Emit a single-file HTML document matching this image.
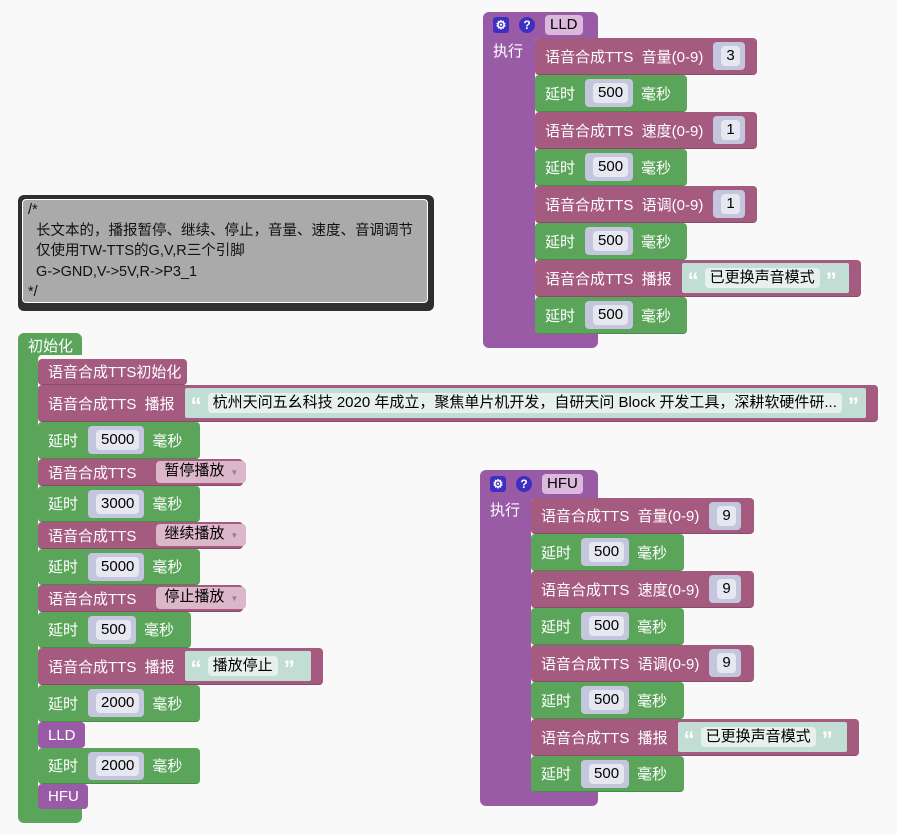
<!DOCTYPE html>
<html><head><meta charset="utf-8"><style>
body{margin:0;width:897px;height:835px;background:#f9f9f9;overflow:hidden;font-family:"Liberation Sans","Noto Sans CJK SC",sans-serif;}
.a{position:absolute;box-sizing:border-box}
.b{position:absolute;box-sizing:border-box;color:#fff;font-size:15px;display:flex;align-items:center;padding-left:10px;white-space:nowrap;border-radius:4px}
.t{background:#a55b80;border-bottom:1px solid #8a4a6a}
.g{background:#5ba55b;border-bottom:1px solid #4a8a4a}
.p{background:#995ba5}
.s{background:#c3c6dc;border-radius:4px;padding:4px 5px 4px 8px;margin:0 8px 0 10px;display:flex}
.f{background:#e6e7f0;color:#000;border-radius:4px;padding:1px 5px;line-height:18px}
.q{background:#c2ddd4;border-radius:2px;padding:4px 6px;margin:0 12px 0 10px;flex:1;display:flex;align-items:center;color:#fff;font-size:22px;font-weight:bold;height:30px;box-sizing:border-box}
.q i{font-style:normal;line-height:18px;padding-top:6px}
.qf{background:#e6f0ec;color:#000;border-radius:4px;padding:1px 5px;line-height:18px;margin:0 6px;font-size:15px;font-weight:normal}
.d{background:#dcb6c9;color:#000;border-radius:4px;padding:1px 8px;line-height:18px;margin-left:20px}
.d span{font-size:8px;color:#888;margin-left:6px}
.ic{display:inline-block;width:16px;height:16px;background:#3d2fc2;color:#fff;font-size:12px;text-align:center;line-height:16px;font-weight:bold;margin-right:10px}
</style></head><body>

<div class="a" style="left:18px;top:195px;width:416px;height:116px;background:#2f2f2f;border-radius:6px"></div>
<div class="a" style="left:22px;top:199px;width:406px;height:104px;background:#aaa;border:1px solid #fff;border-radius:4px;font-size:14.5px;line-height:20.5px;padding:0 0 0 5px;color:#111">/*<br>&nbsp;&nbsp;长文本的，播报暂停、继续、停止，音量、速度、音调调节<br>&nbsp;&nbsp;仅使用TW-TTS的G,V,R三个引脚<br>&nbsp;&nbsp;G-&gt;GND,V-&gt;5V,R-&gt;P3_1<br>*/</div>

<div class="a" style="left:18px;top:333px;width:64px;height:490px;background:#5ba55b;border-radius:6px"></div>
<div class="a" style="left:38px;top:355px;width:50px;height:448px;background:#f9f9f9;border-radius:4px 0 0 4px"></div>
<div class="b" style="left:18px;top:333px;width:64px;height:24px;background:transparent;padding-left:10px">初始化</div>
<div class="b t" style="left:38px;top:359px;width:149px;height:26px">语音合成TTS初始化</div>
<div class="b t" style="left:38px;top:385px;width:840px;height:37px">语音合成TTS&nbsp;&nbsp;播报<div class="q"><i>“</i><span class="qf">杭州天问五幺科技 2020 年成立，聚焦单片机开发，自研天问 Block 开发工具，深耕软硬件研...</span><i>”</i></div></div>
<div class="b g" style="left:38px;top:422px;width:162px;height:37px">延时<div class="s"><span class="f">5000</span></div>毫秒</div>
<div class="b t" style="left:38px;top:459px;width:205px;height:27px">语音合成TTS<div class="d">暂停播放<span>▼</span></div></div>
<div class="b g" style="left:38px;top:486px;width:162px;height:36px">延时<div class="s"><span class="f">3000</span></div>毫秒</div>
<div class="b t" style="left:38px;top:522px;width:205px;height:27px">语音合成TTS<div class="d">继续播放<span>▼</span></div></div>
<div class="b g" style="left:38px;top:549px;width:162px;height:36px">延时<div class="s"><span class="f">5000</span></div>毫秒</div>
<div class="b t" style="left:38px;top:585px;width:205px;height:27px">语音合成TTS<div class="d">停止播放<span>▼</span></div></div>
<div class="b g" style="left:38px;top:612px;width:153px;height:36px">延时<div class="s"><span class="f">500</span></div>毫秒</div>
<div class="b t" style="left:38px;top:648px;width:285px;height:37px">语音合成TTS&nbsp;&nbsp;播报<div class="q"><i>“</i><span class="qf">播放停止</span><i>”</i></div></div>
<div class="b g" style="left:38px;top:685px;width:162px;height:37px">延时<div class="s"><span class="f">2000</span></div>毫秒</div>
<div class="b p" style="left:38px;top:722px;width:47px;height:26px">LLD</div>
<div class="b g" style="left:38px;top:748px;width:162px;height:36px">延时<div class="s"><span class="f">2000</span></div>毫秒</div>
<div class="b p" style="left:38px;top:784px;width:50px;height:25px">HFU</div>

<div class="a" style="left:483px;top:12px;width:115px;height:336px;background:#995ba5;border-radius:6px"></div>
<div class="a" style="left:535px;top:38px;width:63px;height:296px;background:#f9f9f9;border-radius:4px 0 0 4px"></div>
<div class="b" style="left:483px;top:12px;height:26px;padding-left:10px"><span class="ic" style="border-radius:3px">⚙</span><span class="ic" style="border-radius:8px">?</span><span class="f" style="background:#dcb8dc;margin-left:0">LLD</span></div>
<div class="b" style="left:483px;top:38px;height:24px;padding-left:10px">执行</div>
<div class="b t" style="left:535px;top:38px;width:222px;height:37px">语音合成TTS&nbsp;&nbsp;音量(0-9)<div class="s"><span class="f">3</span></div></div>
<div class="b g" style="left:535px;top:75px;width:152px;height:37px">延时<div class="s"><span class="f">500</span></div>毫秒</div>
<div class="b t" style="left:535px;top:112px;width:222px;height:37px">语音合成TTS&nbsp;&nbsp;速度(0-9)<div class="s"><span class="f">1</span></div></div>
<div class="b g" style="left:535px;top:149px;width:152px;height:37px">延时<div class="s"><span class="f">500</span></div>毫秒</div>
<div class="b t" style="left:535px;top:186px;width:222px;height:37px">语音合成TTS&nbsp;&nbsp;语调(0-9)<div class="s"><span class="f">1</span></div></div>
<div class="b g" style="left:535px;top:223px;width:152px;height:37px">延时<div class="s"><span class="f">500</span></div>毫秒</div>
<div class="b t" style="left:535px;top:260px;width:326px;height:37px">语音合成TTS&nbsp;&nbsp;播报<div class="q"><i>“</i><span class="qf">已更换声音模式</span><i>”</i></div></div>
<div class="b g" style="left:535px;top:297px;width:152px;height:37px">延时<div class="s"><span class="f">500</span></div>毫秒</div>

<div class="a" style="left:480px;top:470px;width:118px;height:336px;background:#995ba5;border-radius:6px"></div>
<div class="a" style="left:531px;top:498px;width:67px;height:294px;background:#f9f9f9;border-radius:4px 0 0 4px"></div>
<div class="b" style="left:480px;top:470px;height:28px;padding-left:10px"><span class="ic" style="border-radius:3px">⚙</span><span class="ic" style="border-radius:8px">?</span><span class="f" style="background:#dcb8dc;margin-left:0">HFU</span></div>
<div class="b" style="left:480px;top:498px;height:22px;padding-left:10px">执行</div>
<div class="b t" style="left:531px;top:498px;width:223px;height:36px">语音合成TTS&nbsp;&nbsp;音量(0-9)<div class="s"><span class="f">9</span></div></div>
<div class="b g" style="left:531px;top:534px;width:153px;height:37px">延时<div class="s"><span class="f">500</span></div>毫秒</div>
<div class="b t" style="left:531px;top:571px;width:223px;height:37px">语音合成TTS&nbsp;&nbsp;速度(0-9)<div class="s"><span class="f">9</span></div></div>
<div class="b g" style="left:531px;top:608px;width:153px;height:37px">延时<div class="s"><span class="f">500</span></div>毫秒</div>
<div class="b t" style="left:531px;top:645px;width:223px;height:37px">语音合成TTS&nbsp;&nbsp;语调(0-9)<div class="s"><span class="f">9</span></div></div>
<div class="b g" style="left:531px;top:682px;width:153px;height:37px">延时<div class="s"><span class="f">500</span></div>毫秒</div>
<div class="b t" style="left:531px;top:719px;width:328px;height:37px">语音合成TTS&nbsp;&nbsp;播报<div class="q"><i>“</i><span class="qf">已更换声音模式</span><i>”</i></div></div>
<div class="b g" style="left:531px;top:756px;width:153px;height:36px">延时<div class="s"><span class="f">500</span></div>毫秒</div>
</body></html>
